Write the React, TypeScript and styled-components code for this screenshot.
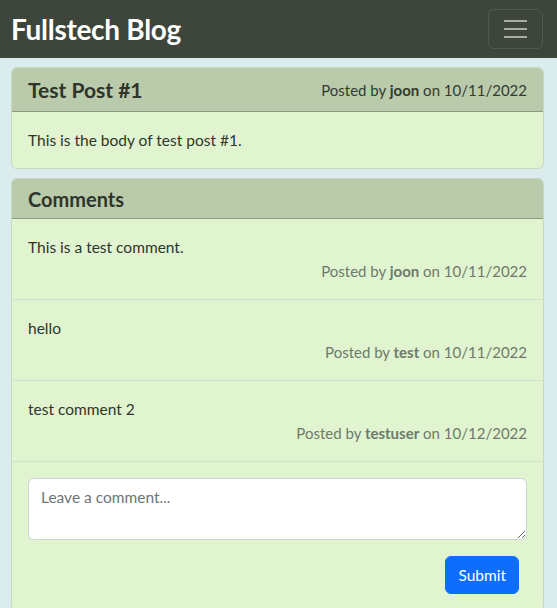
import * as React from "react";
import styled, { createGlobalStyle } from "styled-components";

const GlobalStyle = createGlobalStyle`
  * {
    box-sizing: border-box;
  }
  body {
    margin: 0;
    background: #daedec;
    font-family: "Lato", "Noto Sans", sans-serif;
    font-size: 15.5px;
    line-height: 24px;
    color: #2f342d;
  }
`;

const Navbar = styled.nav`
  height: 58px;
  background: #3e463b;
  display: flex;
  align-items: center;
  justify-content: space-between;
  padding: 0 14px 0 11px;
`;

const Brand = styled.a`
  color: #fff;
  font-size: 28px;
  font-weight: 700;
  text-decoration: none;
  letter-spacing: -0.3px;
`;

const Toggler = styled.button`
  width: 55px;
  height: 40px;
  border: 1px solid rgba(255, 255, 255, 0.1);
  border-radius: 6px;
  background: transparent;
  display: flex;
  flex-direction: column;
  align-items: center;
  justify-content: center;
  gap: 6px;
  padding: 0;
`;

const TogglerLine = styled.span`
  width: 23px;
  height: 2px;
  background: rgba(255, 255, 255, 0.55);
`;

const Main = styled.main`
  padding: 9px 13px 0 11px;
  display: flex;
  flex-direction: column;
  gap: 9px;
`;

const Card = styled.section`
  background: #e0f4cf;
  border: 1px solid #c9d6c0;
  border-radius: 6px;
  overflow: hidden;
`;

const CardHeader = styled.header`
  background: #bacbab;
  border-bottom: 1px solid #8d9b83;
  padding: 0 16px;
  display: flex;
  align-items: center;
  justify-content: space-between;
  height: ${(p: { $tall?: boolean }) => (p.$tall ? "44px" : "40px")};
`;

const Title = styled.h2`
  margin: 0;
  font-size: ${(p: { $size: number }) => p.$size}px;
  font-weight: 700;
  color: #2f352c;
`;

const Meta = styled.div`
  font-size: 15px;
  color: ${(p: { $muted?: boolean }) => (p.$muted ? "#6f7a6a" : "#343a32")};
  text-align: right;
`;

const CardBody = styled.div`
  padding: 16px;
`;

const Comment = styled.div`
  padding: 16px;
  border-bottom: 1px solid #cfe2d0;
  display: flex;
  flex-direction: column;
`;

const Form = styled.form`
  padding: 16px;
  display: flex;
  flex-direction: column;
  align-items: flex-end;
  gap: 16px;
`;

const TextArea = styled.textarea`
  width: 100%;
  height: 62px;
  border: 1px solid #ced4da;
  border-radius: 6px;
  padding: 6px 12px;
  font-family: inherit;
  font-size: 15.5px;
  line-height: 24px;
  color: #212529;
  background: #fff;
  &::placeholder {
    color: #6c757d;
  }
`;

const SubmitButton = styled.button`
  margin-right: 8px;
  background: #0d6efd;
  color: #fff;
  border: 1px solid #0d6efd;
  border-radius: 6px;
  padding: 6px 12px;
  font-family: inherit;
  font-size: 15.5px;
  line-height: 24px;
`;

const comments = [
  { text: "This is a test comment.", user: "joon", date: "10/11/2022" },
  { text: "hello", user: "test", date: "10/11/2022" },
  { text: "test comment 2", user: "testuser", date: "10/12/2022" },
];

const App = () => {
  return (
    <>
      <GlobalStyle />
      <Navbar>
        <Brand href="#">Fullstech Blog</Brand>
        <Toggler aria-label="Toggle navigation">
          <TogglerLine />
          <TogglerLine />
          <TogglerLine />
        </Toggler>
      </Navbar>
      <Main>
        <Card>
          <CardHeader $tall>
            <Title $size={21}>Test Post #1</Title>
            <Meta>
              Posted by <b>joon</b> on 10/11/2022
            </Meta>
          </CardHeader>
          <CardBody>This is the body of test post #1.</CardBody>
        </Card>
        <Card>
          <CardHeader>
            <Title $size={20}>Comments</Title>
          </CardHeader>
          {comments.map((c) => (
            <Comment key={c.text}>
              <span>{c.text}</span>
              <Meta $muted>
                Posted by <b>{c.user}</b> on {c.date}
              </Meta>
            </Comment>
          ))}
          <Form onSubmit={(e) => e.preventDefault()}>
            <TextArea placeholder="Leave a comment..." />
            <SubmitButton type="submit">Submit</SubmitButton>
          </Form>
        </Card>
      </Main>
    </>
  );
};

export default App;
